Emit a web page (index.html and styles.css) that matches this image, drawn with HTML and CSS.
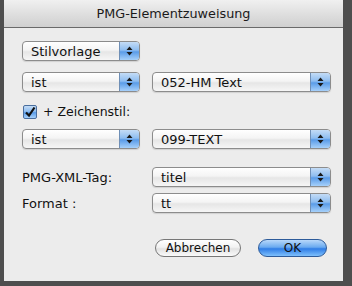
FILE: index.html
```html
<!DOCTYPE html>
<html lang="de">
<head>
    <meta charset="UTF-8">
    <title>PMG-Elementzuweisung</title>
    <link rel="stylesheet" href="styles.css">
</head>
<body>
    <div class="window">
        <header class="titlebar">PMG-Elementzuweisung</header>

        <main class="content">
            <div class="row row-first">
                <div class="popup popup-short"><span class="value">Stilvorlage</span><span class="arrows"><svg width="7" height="10" viewBox="0 0 7 10"><path d="M3.5 0.5 L6.5 4 L0.5 4 Z M0.5 6 L6.5 6 L3.5 9.5 Z"/></svg></span></div>
            </div>

            <div class="row row-gap">
                <div class="popup popup-short"><span class="value">ist</span><span class="arrows"><svg width="7" height="10" viewBox="0 0 7 10"><path d="M3.5 0.5 L6.5 4 L0.5 4 Z M0.5 6 L6.5 6 L3.5 9.5 Z"/></svg></span></div>
                <div class="popup popup-long"><span class="value">052-HM Text</span><span class="arrows"><svg width="7" height="10" viewBox="0 0 7 10"><path d="M3.5 0.5 L6.5 4 L0.5 4 Z M0.5 6 L6.5 6 L3.5 9.5 Z"/></svg></span></div>
            </div>

            <label class="check-row">
                <span class="checkbox"><svg width="12" height="12" viewBox="0 0 12 12"><path d="M2 6.5 L5 9.5 L10.5 1.5" fill="none" stroke="#111" stroke-width="2.2"/></svg></span>
                <span class="check-label">+ Zeichenstil:</span>
            </label>

            <div class="row">
                <div class="popup popup-short"><span class="value">ist</span><span class="arrows"><svg width="7" height="10" viewBox="0 0 7 10"><path d="M3.5 0.5 L6.5 4 L0.5 4 Z M0.5 6 L6.5 6 L3.5 9.5 Z"/></svg></span></div>
                <div class="popup popup-long"><span class="value">099-TEXT</span><span class="arrows"><svg width="7" height="10" viewBox="0 0 7 10"><path d="M3.5 0.5 L6.5 4 L0.5 4 Z M0.5 6 L6.5 6 L3.5 9.5 Z"/></svg></span></div>
            </div>

            <div class="row row-tag">
                <span class="field-label">PMG-XML-Tag:</span>
                <div class="popup popup-long"><span class="value">titel</span><span class="arrows"><svg width="7" height="10" viewBox="0 0 7 10"><path d="M3.5 0.5 L6.5 4 L0.5 4 Z M0.5 6 L6.5 6 L3.5 9.5 Z"/></svg></span></div>
            </div>

            <div class="row row-format">
                <span class="field-label">Format :</span>
                <div class="popup popup-long"><span class="value">tt</span><span class="arrows"><svg width="7" height="10" viewBox="0 0 7 10"><path d="M3.5 0.5 L6.5 4 L0.5 4 Z M0.5 6 L6.5 6 L3.5 9.5 Z"/></svg></span></div>
            </div>

            <div class="buttons">
                <button class="btn btn-cancel">Abbrechen</button>
                <button class="btn btn-ok">OK</button>
            </div>
        </main>
    </div>
</body>
</html>
```

FILE: styles.css
```css
body {
    margin: 0;
    background: #4e4e4e;
    font-family: "DejaVu Sans", "Liberation Sans", sans-serif;
    font-size: 13px;
    color: #111;
    height: 286px;
    overflow: hidden;
}

/* Dialog-Fenster */
.window {
    margin-left: 4px;
    width: 339px;
    height: 281px;
    background: #ececec;
    box-sizing: border-box;
}

.titlebar {
    height: 27px;
    line-height: 27px;
    text-align: center;
    font-size: 12.8px;
    color: #1a1a1a;
    background: linear-gradient(to bottom, #f0f0f0, #dcdcdc 60%, #d0d0d0);
    border-bottom: 1px solid #6a6a6a;
}

.content {
    padding: 13px 0 0 18px;
}

.row {
    display: flex;
    align-items: center;
    gap: 12px;
    height: 20px;
}

.row-gap { margin-top: 11px; }
.row-tag { margin-top: 18px; }
.row-format { margin-top: 6px; }

/* Aufklappmenüs */
.popup {
    display: flex;
    align-items: center;
    height: 20px;
    box-sizing: border-box;
    border: 1px solid #8c8c8c;
    border-radius: 4px;
    background: linear-gradient(to bottom, #ffffff, #f4f4f4 45%, #e6e6e6 55%, #f6f6f6);
    overflow: hidden;
    box-shadow: 0 1px 1px rgba(0, 0, 0, 0.12);
}

.popup-short { width: 118px; }
.popup-long { width: 179px; }

.popup .value {
    flex: 1;
    padding-left: 8px;
    white-space: nowrap;
}

.popup .arrows {
    width: 19px;
    height: 100%;
    display: flex;
    align-items: center;
    justify-content: center;
    background: linear-gradient(to bottom, #c4dcf6, #8ebdf0 45%, #5a9ce8 55%, #a6d0fa);
    border-left: 1px solid #6f8fb6;
}

.popup .arrows path { fill: #1a1a1a; }

.field-label {
    width: 118px;
    white-space: nowrap;
}

/* Checkbox-Zeile */
.check-row {
    display: flex;
    align-items: center;
    gap: 6px;
    height: 17px;
    margin: 11px 0 9px 1px;
}

.checkbox {
    width: 14px;
    height: 14px;
    box-sizing: border-box;
    border: 1px solid #4a6e9e;
    border-radius: 2px;
    background: linear-gradient(to bottom, #c4dcf6, #8ebdf0 45%, #5a9ce8 55%, #a6d0fa);
    display: flex;
    align-items: center;
    justify-content: center;
}

.check-label {
    font-size: 12.5px;
}

/* Schaltflächen */
.buttons {
    display: flex;
    gap: 17px;
    margin: 26px 0 0 133px;
}

.btn {
    height: 18px;
    padding: 0;
    border-radius: 9px;
    font-family: inherit;
    font-size: 12px;
    color: #111;
    line-height: 16px;
}

.btn-cancel {
    width: 86px;
    border: 1px solid #777;
    background: linear-gradient(to bottom, #ffffff, #f2f2f2 45%, #e2e2e2 55%, #fafafa);
}

.btn-ok {
    width: 69px;
    border: 1px solid #2d5b9a;
    background: linear-gradient(to bottom, #b8d8fa, #6aaaf0 45%, #2f7de6 55%, #7ec0fc);
}
```
